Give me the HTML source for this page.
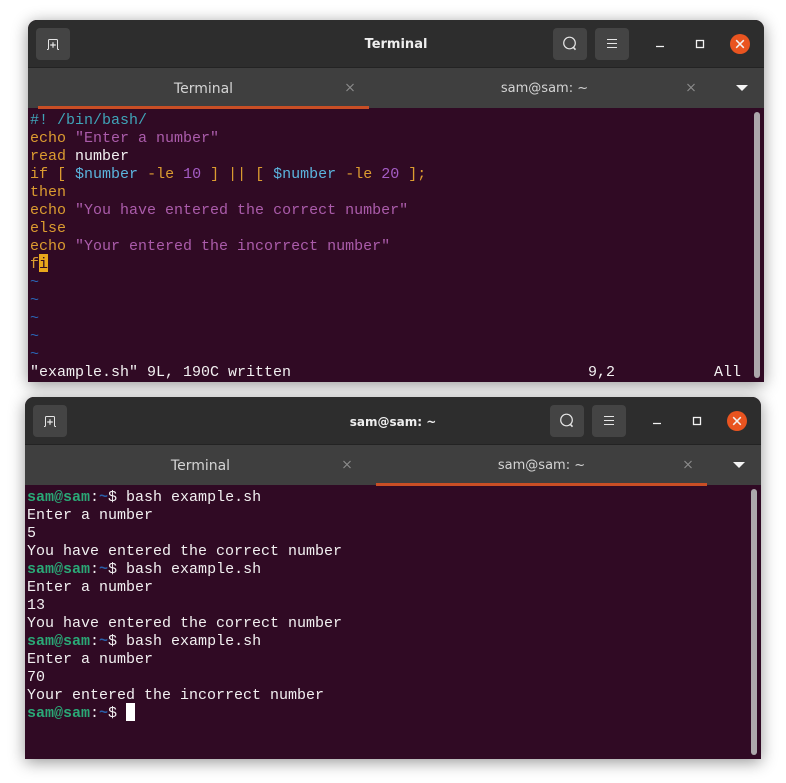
<!DOCTYPE html>
<html><head><meta charset="utf-8"><style>
html,body{margin:0;padding:0;background:#fff;width:786px;height:783px;overflow:hidden}
.w{position:absolute;width:736px;height:362px;border-radius:9px 9px 0 0;box-shadow:0 3px 16px rgba(0,0,0,.42);overflow:hidden;background:#300a24}
.h{position:absolute;left:0;top:0;width:736px;height:48px;background:#2d2d2d;border-bottom:1px solid #232323;box-sizing:border-box}
.t{position:absolute;left:0;top:48px;width:736px;height:40px;background:#3f3f3f}
.b{position:absolute;top:8px;width:34px;height:32px;background:#444;border-radius:4px}
.b svg,.i{position:absolute;left:0;top:0}
.ttl{position:absolute;top:1px;left:0;width:736px;text-align:center;color:#eee;font:bold 13px/48px "DejaVu Sans","Liberation Sans",sans-serif}
.tb{position:absolute;top:49px;width:331px;text-align:center;color:#d4d4d4;font:14px/40px "DejaVu Sans","Liberation Sans",sans-serif}
.u{position:absolute;top:86px;width:331px;height:3px;background:#c94e25}
.sb{position:absolute;left:726px;top:92px;width:6px;height:266px;background:#aca8ab;border-radius:3px}
pre{position:absolute;left:2px;margin:0;font:15px/18px "Liberation Mono",monospace;color:#f2f0f1;white-space:pre}
.o{color:#dc9c30}.p{color:#ab5cab}.c{color:#3fa4b8}.v{color:#5bb4de}.n{color:#a45cc4}.d{color:#2a65b5}.g{color:#2aa876;font-weight:bold}.k{color:#2a5fa8;font-weight:bold}
.cur{color:#300a24}
</style></head><body>

<div class="w" style="left:28px;top:20px">
<div class="h"></div>
<div class="b" style="left:8px"><svg width="34" height="32" fill="none" stroke="#e6e6e6" stroke-width="1"><path d="M11 21.500h.5c.6 0 1-.4 1-1V12.500c0-.6.4-1 1-1h7c.6 0 1 .4 1 1V20.500c0 .6.4 1 1 1h.5"/><path d="M17 14.200v5.600M14.200 17h5.600" stroke-width="1.200"/></svg></div>
<div class="ttl">Terminal</div>
<div class="b" style="left:525px"><svg width="34" height="32" fill="none" stroke="#e6e6e6" stroke-width="1.200"><circle cx="16.500" cy="15" r="5.800"/><path d="M20.500 19.500l2 2.200" stroke-width="1.600"/></svg></div>
<div class="b" style="left:567px"><svg width="34" height="32" stroke="#e6e6e6" stroke-width="1"><path d="M12 11.500h10M12 15.500h10M12 19.500h10"/></svg></div>
<svg class="i" width="736" height="88" fill="none" stroke="#f2f2f2"><path d="M628 26.500h8" stroke-width="1.200"/><rect x="668.500" y="20.500" width="7" height="7" stroke-width="1.300"/><circle cx="712" cy="24" r="10" fill="#e95420" stroke="none"/><path d="M708.200 20.200l7.600 7.600M715.800 20.200l-7.600 7.600" stroke-width="1.500"/></svg>
<div class="t"></div>
<div class="tb" style="left:10px">Terminal</div>
<div class="tb" style="left:351px;font-size:13px">sam@sam: ~</div>
<svg class="i" width="736" height="88" fill="none" stroke="#8e8e8e" stroke-width="1.100"><path d="M318.500 64l7 7M325.500 64l-7 7M659.500 64l7 7M666.500 64l-7 7"/><path d="M708 65h12l-6 6z" fill="#f4f4f4" stroke="none"/></svg>
<div class="u" style="left:10px"></div>
<div class="sb"></div>
<div style="position:absolute;left:11px;top:234px;width:9px;height:18px;background:#e9a71c"></div>
<pre style="top:92px"><span class="c">#! /bin/bash/</span>
<span class="o">echo</span> <span class="p">"Enter a number"</span>
<span class="o">read</span> number
<span class="o">if [</span> <span class="v">$number</span> <span class="o">-le</span> <span class="n">10</span> <span class="o">] || [</span> <span class="v">$number</span> <span class="o">-le</span> <span class="n">20</span> <span class="o">];</span>
<span class="o">then</span>
<span class="o">echo</span> <span class="p">"You have entered the correct number"</span>
<span class="o">else</span>
<span class="o">echo</span> <span class="p">"Your entered the incorrect number"</span>
<span class="o">f</span><span class="cur">i</span>
<span class="d">~</span>
<span class="d">~</span>
<span class="d">~</span>
<span class="d">~</span>
<span class="d">~</span>
"example.sh" 9L, 190C written</pre>
<pre style="top:344px;left:560px">9,2</pre>
<pre style="top:344px;left:686px">All</pre>
</div>

<div class="w" style="left:25px;top:397px">
<div class="h"></div>
<div class="b" style="left:8px"><svg width="34" height="32" fill="none" stroke="#e6e6e6" stroke-width="1"><path d="M11 21.500h.5c.6 0 1-.4 1-1V12.500c0-.6.4-1 1-1h7c.6 0 1 .4 1 1V20.500c0 .6.4 1 1 1h.5"/><path d="M17 14.200v5.600M14.200 17h5.600" stroke-width="1.200"/></svg></div>
<div class="ttl" style="font-size:12px">sam@sam: ~</div>
<div class="b" style="left:525px"><svg width="34" height="32" fill="none" stroke="#e6e6e6" stroke-width="1.200"><circle cx="16.500" cy="15" r="5.800"/><path d="M20.500 19.500l2 2.200" stroke-width="1.600"/></svg></div>
<div class="b" style="left:567px"><svg width="34" height="32" stroke="#e6e6e6" stroke-width="1"><path d="M12 11.500h10M12 15.500h10M12 19.500h10"/></svg></div>
<svg class="i" width="736" height="88" fill="none" stroke="#f2f2f2"><path d="M628 26.500h8" stroke-width="1.200"/><rect x="668.500" y="20.500" width="7" height="7" stroke-width="1.300"/><circle cx="712" cy="24" r="10" fill="#e95420" stroke="none"/><path d="M708.200 20.200l7.600 7.600M715.800 20.200l-7.600 7.600" stroke-width="1.500"/></svg>
<div class="t"></div>
<div class="tb" style="left:10px">Terminal</div>
<div class="tb" style="left:351px;font-size:13px">sam@sam: ~</div>
<svg class="i" width="736" height="88" fill="none" stroke="#8e8e8e" stroke-width="1.100"><path d="M318.500 64l7 7M325.500 64l-7 7M659.500 64l7 7M666.500 64l-7 7"/><path d="M708 65h12l-6 6z" fill="#f4f4f4" stroke="none"/></svg>
<div class="u" style="left:351px"></div>
<div class="sb"></div>
<pre style="top:92px"><span class="g">sam@sam</span>:<span class="k">~</span>$ bash example.sh
Enter a number
5
You have entered the correct number
<span class="g">sam@sam</span>:<span class="k">~</span>$ bash example.sh
Enter a number
13
You have entered the correct number
<span class="g">sam@sam</span>:<span class="k">~</span>$ bash example.sh
Enter a number
70
Your entered the incorrect number
<span class="g">sam@sam</span>:<span class="k">~</span>$ </pre>
<div style="position:absolute;left:101px;top:306px;width:9px;height:18px;background:#fff"></div>
</div>

</body></html>
